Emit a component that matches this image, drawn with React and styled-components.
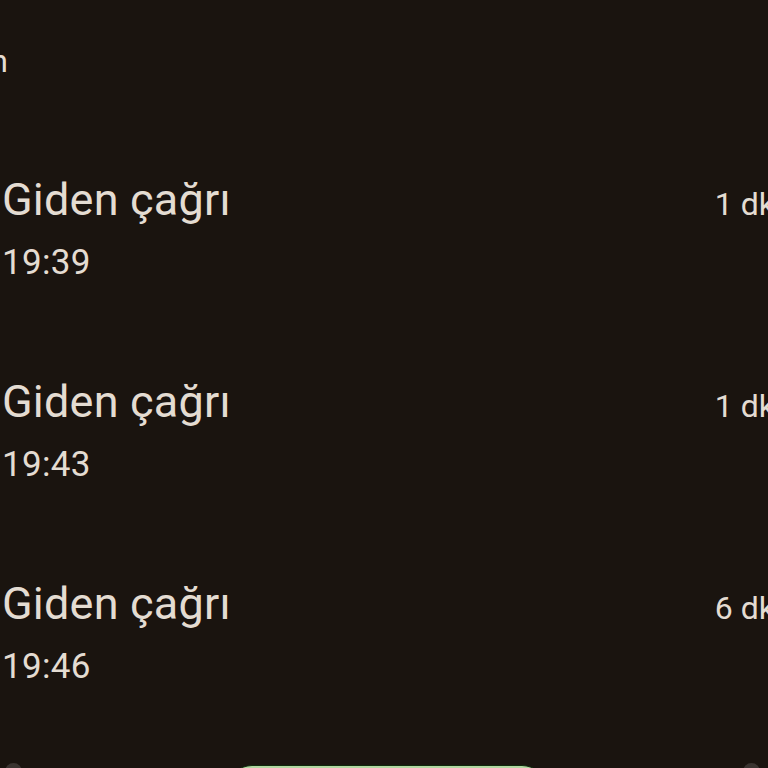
import React from 'react';
import styled, { createGlobalStyle } from 'styled-components';

const GlobalStyle = createGlobalStyle`
  html, body {
    margin: 0;
    padding: 0;
    background: #1a140f;
    overflow: hidden;
  }
  body {
    font-family: Roboto, "Noto Sans", "Liberation Sans", sans-serif;
    color: #e4dcd2;
  }
`;

const calls = [
  { type: 'Giden çağrı', time: '19:39', duration: '1 dk' },
  { type: 'Giden çağrı', time: '19:43', duration: '1 dk' },
  { type: 'Giden çağrı', time: '19:46', duration: '6 dk' },
];

const Page = () => (
  <Screen>
    <Header>
      <span>Bugün</span>
    </Header>
    <List>
      {calls.map((c, i) => (
        <Row key={i}>
          <Title>{c.type}</Title>
          <Duration>{c.duration}</Duration>
          <Time>{c.time}</Time>
        </Row>
      ))}
    </List>
    <BottomBar>
      <NavDot />
      <ActionPill />
      <NavDot />
    </BottomBar>
  </Screen>
);

export default function App() {
  return (
    <>
      <GlobalStyle />
      <Page />
    </>
  );
}

const Screen = styled.div`
  width: 768px;
  height: 768px;
  display: flex;
  flex-direction: column;
  padding-top: 42px;
  box-sizing: border-box;
  overflow: hidden;
`;

const Header = styled.div`
  width: 8px;
  display: flex;
  justify-content: flex-end;
  white-space: nowrap;
  font-size: 32px;
  line-height: 38px;
  color: #e4dcd2;
`;

const List = styled.div`
  display: flex;
  flex-direction: column;
  gap: 93px;
  margin-top: 94px;
  padding-left: 2px;
`;

const Row = styled.div`
  width: 773px;
  display: grid;
  grid-template-columns: 1fr auto;
  align-items: baseline;
  row-gap: 17px;
`;

const Title = styled.div`
  font-size: 45px;
  line-height: 52px;
  letter-spacing: 0.2px;
`;

const Duration = styled.div`
  font-size: 32px;
  line-height: 32px;
  text-align: right;
`;

const Time = styled.div`
  grid-column: 1 / 3;
  font-size: 35px;
  line-height: 40px;
  letter-spacing: 0.3px;
`;

const BottomBar = styled.div`
  margin-top: auto;
  display: flex;
  justify-content: space-between;
  align-items: flex-start;
  padding: 0 8px 0 5px;
  height: 3px;
`;

const NavDot = styled.div`
  width: 17px;
  height: 17px;
  border-radius: 50%;
  background: #3a3430;
  margin-top: -2px;
`;

const ActionPill = styled.div`
  width: 318px;
  height: 48px;
  border-radius: 24px;
  background: #b2d6a2;
  border-top: 1px solid #0f2a0c;
  margin-left: 8px;
`;
